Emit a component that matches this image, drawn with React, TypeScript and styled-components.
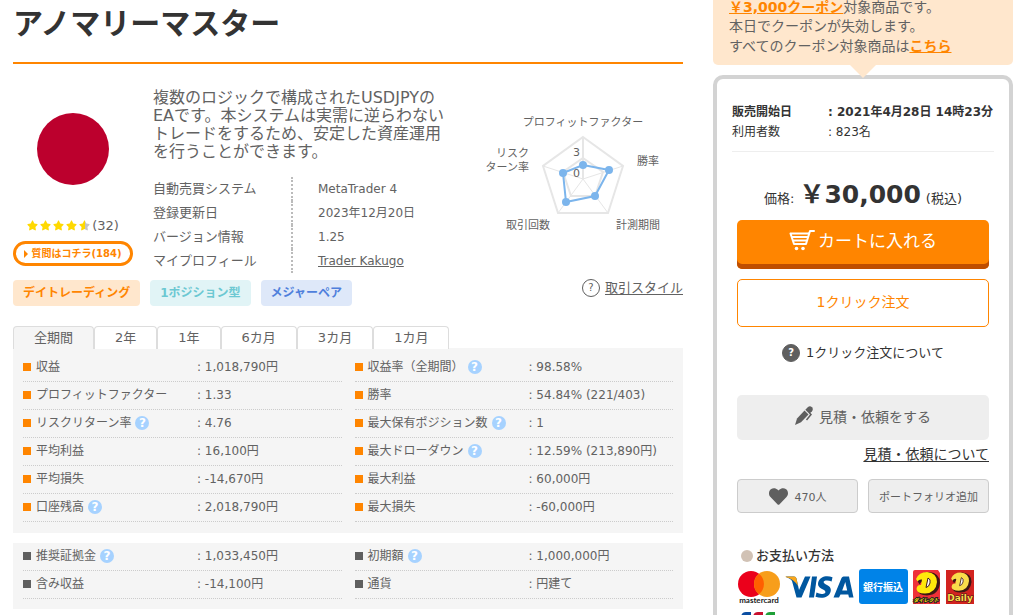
import React from "react";
import styled, { createGlobalStyle } from "styled-components";
import { FaStar, FaHeart } from "react-icons/fa";

const orange = "#ff8500";

const GlobalStyle = createGlobalStyle`
  * { box-sizing: border-box; }
  body {
    margin: 0;
    background: #fff;
    color: #626262;
    font-family: "DejaVu Sans", "Noto Sans CJK JP", sans-serif;
    font-size: 12px;
    line-height: 20px;
  }
  h1, h2, p, dl, dd, dt, ul { margin: 0; padding: 0; }
  button { font-family: inherit; cursor: pointer; padding: 0; color: inherit; }
  a { color: inherit; }
`;

const Page = styled.div`
  display: grid;
  grid-template-columns: minmax(0, 1fr) 300px;
  column-gap: 30px;
  padding: 0 3px 0 13px;
  height: 100vh;
  overflow: hidden;
`;

const Title = styled.h1`
  padding-bottom: 14px;
  border-bottom: 2px solid ${orange};
  color: #333;
  font-size: 30px;
  line-height: 48px;
`;

const Summary = styled.section`
  display: flex;
  padding-top: 24px;
`;

const Portrait = styled.div`
  flex: 0 0 120px;
  margin-right: 20px;
`;

const Flag = styled.svg`
  display: block;
  width: 120px;
  height: 122px;
`;

const Rating = styled.div`
  display: flex;
  justify-content: center;
  align-items: center;
  height: 31px;
  font-size: 13px;
`;

const Star = styled.span<{ $half?: boolean }>`
  display: flex;
  width: 13px;
  color: #ffd900;
  svg { fill: ${(p) => (p.$half ? "url(#halfStar)" : "currentColor")}; }
`;

const AskButton = styled.button`
  display: flex;
  justify-content: center;
  align-items: center;
  gap: 3px;
  width: 100%;
  height: 25px;
  border: 3px solid ${orange};
  border-radius: 13px;
  background: #fff;
  color: ${orange};
  font-size: 10px;
  font-weight: bold;
  line-height: 16px;
`;

const AskArrow = styled.span`
  border-left: 4px solid ${orange};
  border-top: 4px solid transparent;
  border-bottom: 4px solid transparent;
`;

const About = styled.div`
  flex: 0 0 300px;
`;

const Description = styled.p`
  padding-top: 1px;
  margin-bottom: 16px;
  font-size: 16px;
  line-height: 18px;
`;

const InfoList = styled.dl`
  display: grid;
  grid-template-columns: 140px 1fr;
`;

const InfoName = styled.dt`
  border-right: 2px dotted #bbb;
  font-size: 13px;
  line-height: 24px;
`;

const InfoValue = styled.dd`
  padding-left: 25px;
  line-height: 24px;
`;

const Radar = styled.svg`
  flex: 0 0 200px;
  width: 200px;
  height: 140px;
  margin: 12px 0 0 auto;
  text { fill: #626262; font-size: 11px; }
`;

const TagRow = styled.div`
  display: flex;
  align-items: center;
  gap: 10px;
  margin-top: 6px;
`;

const tagColors = {
  orange: ["#ffe7cd", orange],
  teal: ["#e1f4f6", "#6cc8d2"],
  blue: ["#dee8f9", "#4f7fdc"],
};

const Tag = styled.span<{ $tone: keyof typeof tagColors }>`
  padding: 0 10px;
  border-radius: 4px;
  background: ${(p) => tagColors[p.$tone][0]};
  color: ${(p) => tagColors[p.$tone][1]};
  font-weight: bold;
  line-height: 26px;
`;

const StyleLink = styled.a`
  display: flex;
  align-items: center;
  gap: 5px;
  height: 18px;
  margin: 0 0 10px auto;
  font-size: 13px;
  text-decoration: none;
  span { text-decoration: underline; text-underline-offset: 2px; }
`;

const RoundMark = styled.i<{ $filled?: boolean }>`
  display: flex;
  justify-content: center;
  align-items: center;
  width: 18px;
  height: 18px;
  border: 1px solid #5f5f5f;
  border-radius: 50%;
  background: ${(p) => (p.$filled ? "#5f5f5f" : "#fff")};
  color: ${(p) => (p.$filled ? "#fff" : "#5f5f5f")};
  font-size: 10px;
  font-style: normal;
  font-weight: ${(p) => (p.$filled ? "bold" : "normal")};
  line-height: 16px;
`;

const Tabs = styled.div`
  display: flex;
  margin: 19px 0 -1px;
`;

const Tab = styled.button<{ $active?: boolean }>`
  height: 23px;
  padding: 0 20px;
  border: 1px solid #ddd;
  border-bottom: 0;
  border-radius: 4px 4px 0 0;
  background: ${(p) => (p.$active ? "#f5f5f5" : "#fff")};
  font-size: 13px;
  line-height: 22px;
`;

const Panel = styled.section<{ $first?: boolean }>`
  display: grid;
  grid-template-columns: 1fr 1fr;
  column-gap: 13px;
  margin-bottom: 10px;
  padding: ${(p) => (p.$first ? "6px 10px 11px" : "0 10px 10px")};
  background: #f5f5f5;
`;

const StatRow = styled.div`
  display: flex;
  height: 28px;
  border-bottom: 1px dotted #ccc;
  line-height: 26px;
`;

const StatName = styled.div`
  display: flex;
  align-items: center;
  gap: 4px;
  flex: 0 0 174px;
  height: 26px;
`;

const Bullet = styled.span<{ $gray?: boolean }>`
  width: 8px;
  height: 8px;
  margin-right: 1px;
  background: ${(p) => (p.$gray ? "#5f5f5f" : orange)};
`;

const Help = styled.button`
  width: 14px;
  height: 14px;
  border: 0;
  border-radius: 50%;
  background: #a6d2ff;
  color: #fff;
  font-size: 12px;
  font-weight: bold;
  line-height: 14px;
`;

const Coupon = styled.div`
  position: relative;
  margin-bottom: 10px;
  padding: 0 16px 9px;
  border-radius: 0 0 5px 5px;
  background: #ffe7cd;
  font-size: 14px;
  line-height: 20px;
  &::after {
    content: "";
    position: absolute;
    z-index: 1;
    top: 100%;
    left: 50%;
    margin-left: -13px;
    border: 13px solid transparent;
    border-top-color: #ffe7cd;
    border-bottom: 0;
  }
  a { color: ${orange}; font-weight: bold; }
`;

const CouponLead = styled.p`
  padding-bottom: 2px;
  line-height: 14px;
`;

const Card = styled.div`
  padding: 23px 20px 40px;
  border: 4px solid #d3d3d3;
  border-radius: 10px;
  color: #333;
`;

const Facts = styled.dl`
  display: grid;
  grid-template-columns: 96px 1fr;
  margin: 0 -5px;
  padding-bottom: 9px;
  border-bottom: 1px solid #eee;
  white-space: nowrap;
`;

const Strong = styled.span`
  font-weight: bold;
`;

const Price = styled.p`
  display: flex;
  justify-content: center;
  align-items: baseline;
  gap: 5px;
  margin: 27px 0 5px;
  font-size: 13px;
  line-height: 32px;
  strong { font-size: 25px; }
`;

const WideButton = styled.button<{ $kind: "cart" | "outline" | "plain" }>`
  display: flex;
  justify-content: center;
  align-items: center;
  gap: ${(p) => (p.$kind === "cart" ? "3px" : "6px")};
  width: 100%;
  height: ${(p) => (p.$kind === "cart" ? 49 : p.$kind === "outline" ? 48 : 45)}px;
  padding-bottom: ${(p) => (p.$kind === "cart" ? "10px" : "4px")};
  border: ${(p) => (p.$kind === "outline" ? `1px solid ${orange}` : "0")};
  border-radius: 5px;
  background: ${(p) => (p.$kind === "cart" ? orange : p.$kind === "outline" ? "#fff" : "#eee")};
  box-shadow: ${(p) => (p.$kind === "cart" ? "inset 0 -5px #bf4e00" : "none")};
  color: ${(p) => (p.$kind === "cart" ? "#fff" : p.$kind === "outline" ? orange : "#5f5f5f")};
  font-size: ${(p) => (p.$kind === "cart" ? "17px" : "14px")};
`;

const Actions = styled.div`
  display: flex;
  flex-direction: column;
  gap: 10px;
`;

const OneClickHelp = styled.a`
  display: flex;
  justify-content: center;
  align-items: center;
  gap: 6px;
  margin: 16px 0 32px;
  font-size: 13px;
  text-decoration: none;
`;

const QuoteLink = styled.p`
  margin: 4px 0 15px;
  font-size: 14px;
  text-align: right;
  a { text-underline-offset: 2px; }
`;

const ButtonPair = styled.div`
  display: grid;
  grid-template-columns: 1fr 1fr;
  gap: 10px;
`;

const SmallButton = styled.button`
  display: flex;
  justify-content: center;
  align-items: center;
  gap: 7px;
  height: 34px;
  border: 1px solid #ccc;
  border-radius: 4px;
  background: #eee;
  color: #5f5f5f;
  font-size: 11px;
`;

const PaymentTitle = styled.h2`
  display: flex;
  align-items: center;
  gap: 3px;
  margin: 33px 0 3px 4px;
  font-size: 13px;
  font-weight: 500;
  &::before {
    content: "";
    width: 12px;
    height: 12px;
    border-radius: 50%;
    background: #d1c2b5;
  }
`;

const Logos = styled.svg`
  display: block;
  width: 252px;
  height: 66px;
`;

type Stat = [string, string, boolean?];

const results: Stat[] = [
  ["収益", "1,018,790円"],
  ["収益率（全期間）", "98.58%", true],
  ["プロフィットファクター", "1.33"],
  ["勝率", "54.84% (221/403)"],
  ["リスクリターン率", "4.76", true],
  ["最大保有ポジション数", "1", true],
  ["平均利益", "16,100円"],
  ["最大ドローダウン", "12.59% (213,890円)", true],
  ["平均損失", "-14,670円"],
  ["最大利益", "60,000円"],
  ["口座残高", "2,018,790円", true],
  ["最大損失", "-60,000円"],
];

const account: Stat[] = [
  ["推奨証拠金", "1,033,450円", true],
  ["初期額", "1,000,000円", true],
  ["含み収益", "-14,100円"],
  ["通貨", "円建て"],
];

const periods = ["全期間", "2年", "1年", "6カ月", "3カ月", "1カ月"];

function Stats({ items, gray }: { items: Stat[]; gray?: boolean }) {
  return (
    <Panel $first={!gray}>
      {items.map(([name, value, help]) => (
        <StatRow key={name}>
          <StatName>
            <Bullet $gray={gray} />
            <span>{name}</span>
            {help && <Help aria-label={`${name}の説明`}>?</Help>}
          </StatName>
          <span>: {value}</span>
        </StatRow>
      ))}
    </Panel>
  );
}

function RadarChart() {
  return (
    <Radar viewBox="0 0 200 140">
      <g fill="none" stroke="#e6e6e6">
        <path d="M100 37 140 66 125 113H75L60 66Z" strokeWidth="2" />
        <path d="M100 58 120 72 112 96H88L80 72Z" strokeWidth="2" />
        <path d="M100 79 140 66M100 79 125 113M100 79 75 113M100 79 60 66" />
        <path d="M100 79V37" strokeWidth="2" />
      </g>
      <path d="M100 65 126 70 112 96 83 102 80 73Z" fill="none" stroke="#7cb5ec" strokeWidth="2" />
      <g fill="#7cb5ec">
        <circle cx="100" cy="65" r="4" />
        <circle cx="126" cy="70" r="4" />
        <circle cx="112" cy="96" r="4" />
        <circle cx="83" cy="102" r="4" />
        <circle cx="80" cy="73" r="4" />
      </g>
      <text x="100" y="26" textAnchor="middle">プロフィットファクター</text>
      <text x="154" y="65">勝率</text>
      <text x="133" y="129">計測期間</text>
      <text x="23" y="129">取引回数</text>
      <text x="46" y="57" textAnchor="end">リスク</text>
      <text x="46" y="71" textAnchor="end">ターン率</text>
      <text x="97" y="56" textAnchor="end">3</text>
      <text x="97" y="77" textAnchor="end">0</text>
    </Radar>
  );
}

function CartIcon() {
  return (
    <svg width="26" height="22" viewBox="0 0 26 22" fill="none" stroke="#fff" strokeWidth="2" strokeLinecap="round" strokeLinejoin="round">
      <path d="M25 2H21L17 15H5L1.500 4.500H19.500M3.500 8H18M4.500 11.500H17" />
      <circle cx="7.500" cy="19.500" r="1.800" fill="#fff" stroke="none" />
      <circle cx="14" cy="19.500" r="1.800" fill="#fff" stroke="none" />
    </svg>
  );
}

function PenIcon() {
  return (
    <svg width="18" height="19" viewBox="0 0 18 19" fill="#5f5f5f">
      <path d="M0 19 2 12.500 9.500 4.500 13.500 8.500 6 16.300Z" />
      <path d="M10.300 3.700 13 1Q15-.5 17 1.200 18.600 3.200 17 5.200L14.300 7.800Z" />
      <path d="M14.500 7 16 8.500 11.500 14" fill="none" stroke="#5f5f5f" strokeWidth="1.500" />
    </svg>
  );
}

function Mascot({ color }: { color: string }) {
  const body =
    "M179 10Q182 3 190 3 200 4 200 13 199 24 188 24.500 180 24.500 179.500 20 180 15.500 184 16L185 10.500Q182 10 180.500 12.500Z";
  return (
    <>
      <path d={body} fill="#3d1815" stroke="#3d1815" strokeWidth="2" transform="translate(2 1)" />
      <path d={body} fill={color} />
      <path d="M191 9Q194 10 193 14 192 18 189 18.500Z" fill="#fff" stroke="#3d1815" />
    </>
  );
}

function PaymentLogos() {
  return (
    <Logos viewBox="0 0 252 66" role="img" aria-label="mastercard, VISA, 銀行振込, Daily, JCB">
      <circle cx="14" cy="15" r="13" fill="#eb001b" />
      <circle cx="30" cy="15" r="13" fill="#f79e1b" />
      <path d="M22 4.800a13 13 0 0 1 0 20.400a13 13 0 0 1 0-20.400Z" fill="#ff5f00" />
      <text x="22" y="34" textAnchor="middle" fontSize="8" fontWeight="bold" fontFamily="Lato, sans-serif" fill="#222">mastercard</text>

      <g fill="#00579f">
        <path d="M49 7.500H57Q59 7.500 59.500 9.500L62 21 68 7.500H73.500L64.500 28.500H59.500L55 12Q54 10 49 8Z" />
        <path d="M75 7.500H80L77 28.500H72Z" />
        <path d="M95.500 8.300 94.600 12.500Q91.500 11 88.500 11.500C85 12.500 87 14.500 89.500 15.700 93.500 17.500 94.500 20 93.500 23 92 28.500 85 30 78.500 27.800L79.500 23.500Q83 25.500 86.500 24.800C89.500 24 88.800 21.800 86 20.500 82 18.500 80.300 16.500 81.300 13 83 7.300 90 6 95.500 8.300Z" />
        <path fillRule="evenodd" d="M106.500 7.500H112L116.500 28.500H112L111.300 25.500H103.500L102 28.500H96.500L104.500 9Q105.200 7.500 106.500 7.500ZM108.300 13 105.200 21.500H110.200Z" />
      </g>
      <path d="M48.500 7.500H57Q59 7.500 59.500 9.500L61 17Q57 10 48.500 8Z" fill="#faa61a" />

      <rect x="122" y="0" width="49" height="35" rx="3" fill="#0083e8" />
      <text x="146" y="22" textAnchor="middle" fontSize="10" fontWeight="bold" fill="#fff">銀行振込</text>

      <path d="M178 1H201L203 4V35H176V3Q176 1 178 1Z" fill="#ee3138" />
      <Mascot color="#ffe80b" />
      <text x="189" y="33" textAnchor="middle" fontSize="5" fontWeight="bold" fontStyle="italic" fill="#ffe80b" stroke="#222" strokeWidth="2" paintOrder="stroke">ダイレクト</text>

      <rect x="209" y="1" width="28" height="34" fill="#d2231f" />
      <g transform="translate(62 1) scale(.85)">
        <Mascot color="#f9dc4a" />
      </g>
      <text x="223" y="32" textAnchor="middle" fontSize="9" fontWeight="bold" fill="#f9dc4a" stroke="#3d1815" strokeWidth="1" paintOrder="stroke">Daily</text>

      <path d="M4 66V49Q4 43 9 43H14V61Q14 66 9 66Z" fill="#0b4ea2" />
      <path d="M16 66V49Q16 43 21 43H26V61Q26 66 21 66Z" fill="#c8102e" />
      <path d="M28 66V49Q28 43 33 43H38V61Q38 66 33 66Z" fill="#1fa038" />
    </Logos>
  );
}

export default function App() {
  return (
    <>
      <GlobalStyle />
      <Page>
        <main>
          <Title>アノマリーマスター</Title>
          <Summary>
            <Portrait>
              <Flag viewBox="0 0 120 122">
                <circle cx="60" cy="61" r="36" fill="#bc002d" />
              </Flag>
              <Rating>
                <svg width="0" height="0">
                  <linearGradient id="halfStar">
                    <stop offset="50%" stopColor="#ffd900" />
                    <stop offset="50%" stopColor="#c4c4c4" />
                  </linearGradient>
                </svg>
                {[0, 1, 2, 3, 4].map((i) => (
                  <Star key={i} $half={i === 4}>
                    <FaStar size={11} />
                  </Star>
                ))}
                (32)
              </Rating>
              <AskButton>
                <AskArrow />
                質問はコチラ(184)
              </AskButton>
            </Portrait>
            <About>
              <Description>
                複数のロジックで構成されたUSDJPYのEAです。本システムは実需に逆らわないトレードをするため、安定した資産運用を行うことができます。
              </Description>
              <InfoList>
                <InfoName>自動売買システム</InfoName>
                <InfoValue>MetaTrader 4</InfoValue>
                <InfoName>登録更新日</InfoName>
                <InfoValue>2023年12月20日</InfoValue>
                <InfoName>バージョン情報</InfoName>
                <InfoValue>1.25</InfoValue>
                <InfoName>マイプロフィール</InfoName>
                <InfoValue>
                  <a href="#profile">Trader Kakugo</a>
                </InfoValue>
              </InfoList>
            </About>
            <RadarChart />
          </Summary>
          <TagRow>
            <Tag $tone="orange">デイトレーディング</Tag>
            <Tag $tone="teal">1ポジション型</Tag>
            <Tag $tone="blue">メジャーペア</Tag>
            <StyleLink href="#style">
              <RoundMark>?</RoundMark>
              <span>取引スタイル</span>
            </StyleLink>
          </TagRow>
          <Tabs>
            {periods.map((p, i) => (
              <Tab key={p} $active={i === 0}>
                {p}
              </Tab>
            ))}
          </Tabs>
          <Stats items={results} />
          <Stats items={account} gray />
        </main>
        <aside>
          <Coupon>
            <CouponLead>
              <a href="#coupon">￥3,000クーポン</a>対象商品です。
            </CouponLead>
            <p>本日でクーポンが失効します。</p>
            <p>
              すべてのクーポン対象商品は<a href="#coupons">こちら</a>
            </p>
          </Coupon>
          <Card>
            <Facts>
              <dt>
                <Strong>販売開始日</Strong>
              </dt>
              <dd>
                <Strong>: 2021年4月28日 14時23分</Strong>
              </dd>
              <dt>利用者数</dt>
              <dd>: 823名</dd>
            </Facts>
            <Price>
              <span>価格:</span>
              <strong>￥30,000</strong>
              <span>(税込)</span>
            </Price>
            <Actions>
              <WideButton $kind="cart">
                <CartIcon />
                カートに入れる
              </WideButton>
              <WideButton $kind="outline">1クリック注文</WideButton>
            </Actions>
            <OneClickHelp href="#one-click">
              <RoundMark $filled>?</RoundMark>
              1クリック注文について
            </OneClickHelp>
            <WideButton $kind="plain">
              <PenIcon />
              見積・依頼をする
            </WideButton>
            <QuoteLink>
              <a href="#quote">見積・依頼について</a>
            </QuoteLink>
            <ButtonPair>
              <SmallButton>
                <FaHeart size={19} />
                470人
              </SmallButton>
              <SmallButton>ポートフォリオ追加</SmallButton>
            </ButtonPair>
            <PaymentTitle>お支払い方法</PaymentTitle>
            <PaymentLogos />
          </Card>
        </aside>
      </Page>
    </>
  );
}
